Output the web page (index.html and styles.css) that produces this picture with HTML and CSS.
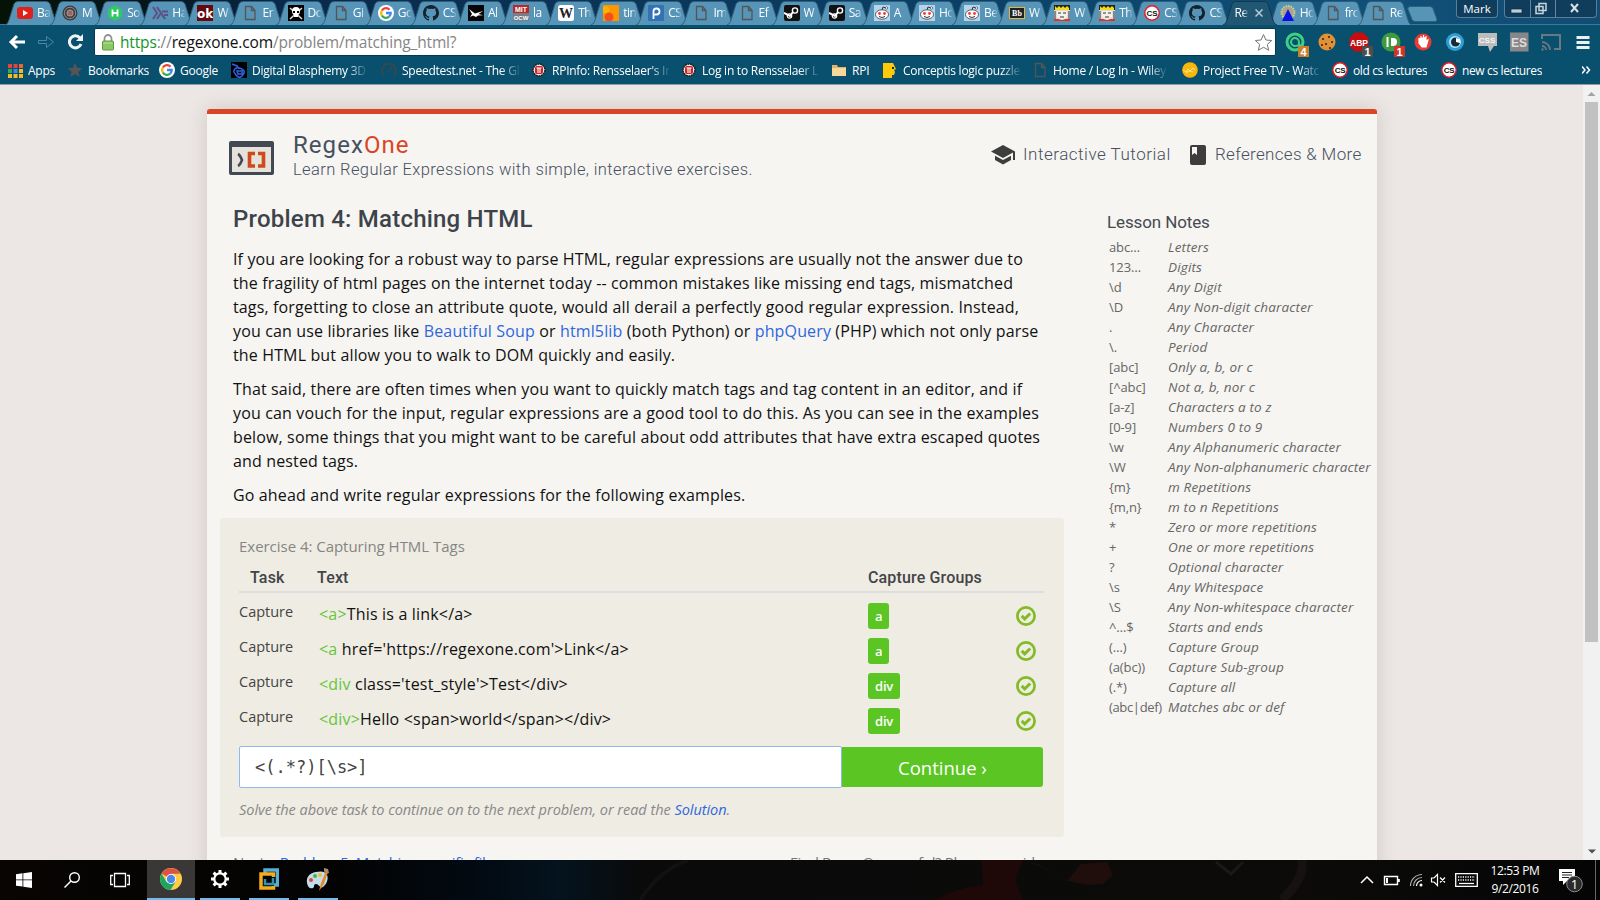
FILE: index.html
```html
<!DOCTYPE html>
<html lang="en">
<head>
<meta charset="utf-8">
<title>RegexOne - Problem 4: Matching HTML</title>
<link rel="stylesheet" href="styles.css">
</head>
<body>
<svg class="defs" width="0" height="0">
  <symbol id="tab" viewBox="0 0 54 25"><path class="tab-fill" d="M0 25C3 24 3 22 4 20L9 4Q10 1.500 13 1.500H41Q44 1.500 45 4L50 20C51 22 51 24 54 25"/></symbol>
  <symbol id="page" viewBox="0 0 16 16"><path d="M3.500 1.500h6l3.500 4v9H3.500zM9.500 1.500v4H13" fill="none" stroke="#555" stroke-width="1.300"/></symbol>
  <symbol id="google" viewBox="0 0 16 16"><circle cx="8" cy="8" r="8" fill="#fff"/><g fill="none" stroke-width="2.300"><path d="M3.900 5.500A4.700 4.700 0 0 1 11.500 4.700" stroke="#ea4335"/><path d="M3.900 5.500a4.700 4.700 0 0 0 0 5" stroke="#fbbc05"/><path d="M3.900 10.500a4.700 4.700 0 0 0 7.400 1" stroke="#34a853"/><path d="M11.300 11.500A4.700 4.700 0 0 0 12.700 8H8" stroke="#4285f4"/></g></symbol>
  <symbol id="github" viewBox="0 0 16 16"><path fill="#15232d" d="M8 0C3.580 0 0 3.580 0 8c0 3.540 2.290 6.530 5.470 7.590.4.070.55-.17.55-.38v-1.490c-2.230.48-2.690-.95-2.690-.95-.36-.92-.89-1.170-.89-1.170-.72-.5.060-.49.060-.49.8.060 1.230.82 1.230.82.71 1.220 1.870.87 2.330.66.070-.52.280-.87.500-1.070-1.780-.2-3.640-.89-3.640-3.950 0-.87.310-1.590.82-2.150-.08-.2-.36-1.020.080-2.120 0 0 .67-.21 2.200.82a7.600 7.600 0 0 1 4 0c1.530-1.040 2.200-.82 2.200-.82.44 1.100.16 1.920.080 2.120.51.560.82 1.270.82 2.150 0 3.070-1.870 3.750-3.650 3.950.29.250.54.730.54 1.480v2.200c0 .21.150.46.550.38A8 8 0 0 0 8 0"/></symbol>
  <symbol id="steam" viewBox="0 0 16 16"><rect width="16" height="16" rx="2" fill="#111"/><circle cx="11" cy="5.500" r="2.600" fill="none" stroke="#fff" stroke-width="1.400"/><path d="M0 8l6 3 3-4" stroke="#fff" stroke-width="2" fill="none"/><circle cx="5.500" cy="11" r="2.200" fill="none" stroke="#fff" stroke-width="1.200"/></symbol>
  <symbol id="reddit" viewBox="0 0 16 16"><rect width="16" height="16" fill="#b5d5ef"/><path d="M8 5l1-3 3 1" fill="none" stroke="#333"/><circle cx="12.500" cy="3" r="1.200" fill="#fff" stroke="#333" stroke-width=".6"/><ellipse cx="8" cy="9.500" rx="6.500" ry="4.700" fill="#fff" stroke="#333" stroke-width=".8"/><circle cx="5.500" cy="8.500" r="1.400" fill="#f33"/><circle cx="10.500" cy="8.500" r="1.400" fill="#f33"/><path d="M5 11.500q3 2 6 0" fill="none" stroke="#333"/></symbol>
  <symbol id="king" viewBox="0 0 16 16"><rect width="16" height="16" fill="#ddd"/><path d="M0 0h16v5H0z" fill="#222"/><path d="M1 1l2 2 2-2 2 2 2-2 2 2 2-2 2 2v2H1z" fill="#f5dc1a"/><path d="M3 6h10v6l-5 3-5-3z" fill="#f4f0ea"/><path d="M4 8h3M9 8h3M6 12h4M1 6v8M15 6v8" stroke="#333"/><path d="M0 14h4l4 1 4-1h4v2H0z" fill="#d32"/></symbol>
  <symbol id="cs" viewBox="0 0 16 16"><circle cx="8" cy="8" r="7.200" fill="#fff" stroke="#e31b23" stroke-width="1.400"/><text x="8" y="11" text-anchor="middle" class="fav-cs">CS</text></symbol>
  <symbol id="rpi" viewBox="0 0 16 16"><circle cx="8" cy="8" r="6" fill="#eee" stroke="#222" stroke-width="1.600" stroke-dasharray="2 .6"/><rect x="4" y="4" width="8" height="8" rx="2" fill="#c9252b"/><path d="M5.500 6h5M7 6v5M9 6v5" stroke="#fff" stroke-width="1.100"/></symbol>
  <symbol id="check" viewBox="0 0 20 20"><circle cx="10" cy="10" r="8.600" fill="none" stroke="#82bb26" stroke-width="2.700"/><path d="M5.700 9.900l3 3 5.500-5.400" fill="none" stroke="#82bb26" stroke-width="3"/></symbol>
</svg>

<header class="browser">
  <div class="tabstrip">
    <div class="tabs">
      <div class="tab"><svg class="shape"><use href="#tab"/></svg><svg class="fav" viewBox="0 0 16 16"><rect y="2" width="16" height="12" rx="3" fill="#e0201b"/><path d="M6 5l5 3-5 3z" fill="#fff"/></svg><span>Ba</span></div>
      <div class="tab"><svg class="shape"><use href="#tab"/></svg><svg class="fav" viewBox="0 0 16 16"><circle cx="8" cy="8" r="7.500" fill="#3d3d40"/><circle cx="8" cy="8" r="5.700" fill="none" stroke="#aaa" stroke-width=".7"/><circle cx="8" cy="8" r="3.500" fill="#98908b"/><path d="M7 6v4M9 6v4" stroke="#a33"/></svg><span>M</span></div>
      <div class="tab"><svg class="shape"><use href="#tab"/></svg><svg class="fav" viewBox="0 0 16 16"><path d="M8 0l7 4v8l-7 4-7-4V4z" fill="#2ec866"/><path d="M5.500 4.500v7M10.500 4.500v7M5.500 8h5" stroke="#fff" stroke-width="1.800"/></svg><span>So</span></div>
      <div class="tab"><svg class="shape"><use href="#tab"/></svg><svg class="fav" viewBox="0 0 16 16"><path d="M1 2l4 6-4 6M5 2l8 12M5 14l4-6M10 6.500h6M12 10h4" fill="none" stroke="#5e5086" stroke-width="2"/></svg><span>Ha</span></div>
      <div class="tab"><svg class="shape"><use href="#tab"/></svg><svg class="fav" viewBox="0 0 16 16"><rect width="16" height="16" fill="#640a0c"/><text x="8" y="12.500" text-anchor="middle" class="fav-ok">ok</text></svg><span>W</span></div>
      <div class="tab"><svg class="shape"><use href="#tab"/></svg><svg class="fav"><use href="#page"/></svg><span>Er</span></div>
      <div class="tab"><svg class="shape"><use href="#tab"/></svg><svg class="fav" viewBox="0 0 16 16"><rect width="16" height="16" fill="#000"/><path d="M2 3l12 11M14 3L2 14" stroke="#ddd" stroke-width="1.500"/><path d="M4 6q0-4 4-4t4 4q0 3-2 4v2H6v-2Q4 9 4 6" fill="#fff"/><path d="M5 6h2v2H5zM9 6h2v2H9z"/></svg><span>Do</span></div>
      <div class="tab"><svg class="shape"><use href="#tab"/></svg><svg class="fav"><use href="#page"/></svg><span>Gi</span></div>
      <div class="tab"><svg class="shape"><use href="#tab"/></svg><svg class="fav"><use href="#google"/></svg><span>Go</span></div>
      <div class="tab"><svg class="shape"><use href="#tab"/></svg><svg class="fav"><use href="#github"/></svg><span>CS</span></div>
      <div class="tab"><svg class="shape"><use href="#tab"/></svg><svg class="fav" viewBox="0 0 16 16"><rect width="16" height="16" fill="#050505"/><path d="M1 4l6 4.500L15 6l-4.500 3 4.500 1.200-5 .3-2 1.500-3-1.500-3 1.500 2-3z" fill="#fff"/></svg><span>Al</span></div>
      <div class="tab"><svg class="shape"><use href="#tab"/></svg><svg class="fav" viewBox="0 0 16 16"><rect width="16" height="8" fill="#b8292c"/><rect y="8" width="16" height="8" fill="#777f86"/><text x="8" y="7" text-anchor="middle" class="fav-mit">MIT</text><text x="8" y="15" text-anchor="middle" class="fav-ocw">OCW</text></svg><span>la</span></div>
      <div class="tab"><svg class="shape"><use href="#tab"/></svg><svg class="fav" viewBox="0 0 16 16"><rect width="16" height="16" rx="2.500" fill="#fff"/><text x="8" y="12.500" text-anchor="middle" class="fav-wiki">W</text></svg><span>Th</span></div>
      <div class="tab"><svg class="shape"><use href="#tab"/></svg><svg class="fav" viewBox="0 0 16 16"><rect width="16" height="16" fill="#ff9600"/><circle cx="3" cy="5" r="3.500" fill="#ffb300"/><circle cx="6" cy="12" r="4.500" fill="#f2511b"/></svg><span>tin</span></div>
      <div class="tab"><svg class="shape"><use href="#tab"/></svg><svg class="fav" viewBox="0 0 16 16"><rect width="16" height="16" rx="1" fill="#3273b5"/><path d="M5.500 14V6.500q0-3 3-3t3 3-3 3h-2" fill="none" stroke="#fff" stroke-width="1.800"/></svg><span>CS</span></div>
      <div class="tab"><svg class="shape"><use href="#tab"/></svg><svg class="fav"><use href="#page"/></svg><span>Im</span></div>
      <div class="tab"><svg class="shape"><use href="#tab"/></svg><svg class="fav"><use href="#page"/></svg><span>Ef</span></div>
      <div class="tab"><svg class="shape"><use href="#tab"/></svg><svg class="fav"><use href="#steam"/></svg><span>W</span></div>
      <div class="tab"><svg class="shape"><use href="#tab"/></svg><svg class="fav"><use href="#steam"/></svg><span>Sa</span></div>
      <div class="tab"><svg class="shape"><use href="#tab"/></svg><svg class="fav"><use href="#reddit"/></svg><span>A</span></div>
      <div class="tab"><svg class="shape"><use href="#tab"/></svg><svg class="fav"><use href="#reddit"/></svg><span>Ho</span></div>
      <div class="tab"><svg class="shape"><use href="#tab"/></svg><svg class="fav"><use href="#reddit"/></svg><span>Be</span></div>
      <div class="tab"><svg class="shape"><use href="#tab"/></svg><svg class="fav" viewBox="0 0 16 16"><rect x=".5" y="2.500" width="15" height="11" fill="#222" stroke="#e7b53a"/><text x="8" y="11" text-anchor="middle" class="fav-bb">Bb</text></svg><span>W</span></div>
      <div class="tab"><svg class="shape"><use href="#tab"/></svg><svg class="fav"><use href="#king"/></svg><span>W</span></div>
      <div class="tab"><svg class="shape"><use href="#tab"/></svg><svg class="fav"><use href="#king"/></svg><span>Th</span></div>
      <div class="tab"><svg class="shape"><use href="#tab"/></svg><svg class="fav"><use href="#cs"/></svg><span>CS</span></div>
      <div class="tab"><svg class="shape"><use href="#tab"/></svg><svg class="fav"><use href="#github"/></svg><span>CS</span></div>
      <div class="tab active"><svg class="shape"><use href="#tab"/></svg><span>Re</span><svg class="close" viewBox="0 0 8 8"><path d="M.5.500l7 7M7.500.500l-7 7" stroke="#b5cbd6" stroke-width="1.500"/></svg></div>
      <div class="tab"><svg class="shape"><use href="#tab"/></svg><svg class="fav" viewBox="0 0 16 16"><circle cx="8" cy="7.500" r="6.500" fill="#a9a58c" stroke="#d9cf84" stroke-width="2" stroke-dasharray="1.500 1"/><path d="M8 4l6 12H2z" fill="#0b12e6"/></svg><span>Ho</span></div>
      <div class="tab"><svg class="shape"><use href="#tab"/></svg><svg class="fav"><use href="#page"/></svg><span>fro</span></div>
      <div class="tab"><svg class="shape"><use href="#tab"/></svg><svg class="fav"><use href="#page"/></svg><span>Re</span></div>
    </div>
    <svg class="newtab" width="31" height="16" viewBox="0 0 31 16"><path d="M3 .5h20q2 0 3 2l4 11q0 2-2 2H8q-2 0-3-2L.800 3q0-2.500 2.200-2.500" fill="#5695b5" stroke="#2c607d"/></svg>
    <div class="user">Mark</div>
    <div class="winctl">
      <svg width="92" height="17" viewBox="0 0 92 17"><path d="M25.500 0v17M50.500 0v17" stroke="#6286a0"/><g fill="#b9cedb" stroke="#10283b" stroke-width=".7"><rect x="6" y="9" width="11" height="4"/></g><path d="M34 3.500h7v7h-7zM31 6.500h7v7h-7z" fill="none" stroke="#c5d5df" stroke-width="1.500"/><path d="M66 4l7 8M73 4l-7 8" stroke="#d5e1e8" stroke-width="2"/></svg>
    </div>
  </div>

  <div class="toolbar">
    <svg class="nav" width="88" height="20" viewBox="0 0 88 20"><path d="M25 10H12M17 4l-6 6 6 6" fill="none" stroke="#fff" stroke-width="3"/><path d="M38.500 8.500h8v-4l7 5.500-7 5.500v-4h-8z" fill="none" stroke="#4d86a3"/><path d="M80 6a6 6 0 1 0 1 6" fill="none" stroke="#eef3f6" stroke-width="3"/><path d="M83 2v7h-7z" fill="#eef3f6"/></svg>
    <div class="omnibox">
      <svg width="12" height="17" viewBox="0 0 12 17"><path d="M2.500 8V4.500a3.500 3.500 0 0 1 7 0V8" fill="none" stroke="#929292" stroke-width="1.800"/><rect x=".5" y="7" width="11" height="9" rx="1" fill="#8cc766" stroke="#5a9c3a"/><path d="M1.500 9h9" stroke="#b9e39d"/></svg>
      <p class="url"><b>https</b>://<i>regexone.com</i>/problem/matching_html?</p>
      <svg class="star" width="19" height="19" viewBox="0 0 19 19"><path d="M9.500 1.500l2.400 5.500 5.800.5-4.400 3.900 1.400 5.900-5.200-3.100-5.200 3.100 1.400-5.900L1.300 7.500 7.100 7z" fill="#fff" stroke="#777"/></svg>
    </div>
    <div class="exts">
      <svg viewBox="0 0 32 32"><circle cx="16" cy="16" r="8" fill="none" stroke="#3fcf83" stroke-width="3"/><path d="M20 19v-3a4 4 0 1 0-2 3.500q3 1 4-1" fill="none" stroke="#3fcf83" stroke-width="2"/><rect x="19" y="20" width="11" height="11" fill="#c9812f"/><text x="24.500" y="29.500" class="count">4</text></svg>
      <svg viewBox="0 0 32 32"><circle cx="16" cy="16" r="8.500" fill="#dd9138"/><path d="M11 12h2v2h-2zM17 10h2v2h-2zM14 17h2v2h-2zM20 15h2v2h-2zM18 21h2v2h-2zM10 18h2v2h-2z" fill="#6c350c"/></svg>
      <svg viewBox="0 0 32 32"><path d="M12 6.500h8l5.500 5.500v8L20 25.500h-8L6.500 20v-8z" fill="#c70d0d"/><text x="16" y="19.500" class="abp">ABP</text><rect x="19" y="20" width="11" height="11" fill="#4d4d4d"/><text x="24.500" y="29.500" class="count">1</text></svg>
      <svg viewBox="0 0 32 32"><circle cx="16" cy="16" r="9.500" fill="#3f9a3f"/><path d="M12.500 11v10" stroke="#fff" stroke-width="2"/><path d="M16 12h2a4 4 0 0 1 0 8h-2z" fill="#fff"/><rect x="19" y="20" width="11" height="11" fill="#ce3427"/><text x="24.500" y="29.500" class="count">1</text></svg>
      <svg viewBox="0 0 32 32"><circle cx="16" cy="16" r="8.500" fill="#e83c30"/><path d="M12 12v5l3 4h4l2-7-2 1v-4M14 15v-5M16.500 15V9M19 15v-5" fill="#fff" stroke="#fff" stroke-width="1.200"/></svg>
      <svg viewBox="0 0 32 32"><circle cx="16" cy="16" r="9" fill="#2f9fd3"/><circle cx="16" cy="16" r="6" fill="#b4e4f8"/><circle cx="16.500" cy="16" r="4.500" fill="#132b3a"/><path d="M17 12v4l4 1v-4z" fill="#fff"/></svg>
      <svg viewBox="0 0 32 32"><path d="M7 7h19v13h-3l-4 6-2-6H7z" fill="#bcbcbc"/><text x="16" y="17" class="css">CSS</text></svg>
      <svg viewBox="0 0 32 32"><rect x="7" y="6.500" width="18.500" height="19" fill="#878787"/><text x="16" y="20.500" class="es">ES</text></svg>
      <svg viewBox="0 0 32 32"><path d="M7 13V9h18v14h-6" fill="none" stroke="#68797f" stroke-width="2"/><path d="M7 16a8 8 0 0 1 8 8M7 20a4 4 0 0 1 4 4" fill="none" stroke="#68797f" stroke-width="1.800"/><circle cx="7.500" cy="23.500" r="1.200" fill="#68797f"/></svg>
      <svg viewBox="0 0 32 32"><path d="M9.500 11.500h13M9.500 16.500h13M9.500 21.500h13" stroke="#e9f0f3" stroke-width="3.200"/></svg>
    </div>
  </div>

  <nav class="bookmarks">
    <a><svg viewBox="0 0 16 16"><path d="M1 2h4v4H1z" fill="#e4453a"/><path d="M6.500 2h4v4h-4z" fill="#e4453a"/><path d="M12 2h4v4h-4z" fill="#e8653a"/><path d="M1 7h4v4H1z" fill="#35a853"/><path d="M6.500 7h4v4h-4z" fill="#4285f4"/><path d="M12 7h4v4h-4zM1 12h4v4H1zM6.500 12h4v4h-4zM12 12h4v4h-4z" fill="#f5b921"/></svg><span>Apps</span></a>
    <a><svg viewBox="0 0 16 16"><path d="M8 .8l2 5 5.500.4-4.200 3.500 1.300 5.300L8 12.100 3.400 15l1.300-5.300L.5 6.200 6 5.800z" fill="#555"/></svg><span>Bookmarks</span></a>
    <a><svg><use href="#google"/></svg><span>Google</span></a>
    <a><svg viewBox="0 0 16 16"><rect width="16" height="16" fill="#000"/><path d="M1 2l5 2 2 3M3 9q1-4 5-3t5 3-2 5-6-1-2-4M6 9h5v3H7z" stroke="#3160dd" stroke-width="1.600" fill="none"/></svg><span>Digital Blasphemy 3D</span></a>
    <a><svg viewBox="0 0 16 16"><path d="M3.500 14a7 7 0 1 1 9 0" fill="none" stroke="#3c474c" stroke-width="1.700"/><path d="M7 10l4-5" stroke="#3c474c" stroke-width="2"/></svg><span>Speedtest.net - The Gl</span></a>
    <a><svg><use href="#rpi"/></svg><span>RPInfo: Rensselaer's In</span></a>
    <a><svg><use href="#rpi"/></svg><span>Log in to Rensselaer L</span></a>
    <a><svg viewBox="0 0 16 16"><path d="M1 3h5l1 2h8v9H1z" fill="#e2b469"/><path d="M1 6h14v8H1z" fill="#f8d898"/></svg><span>RPI</span></a>
    <a><svg viewBox="0 0 16 16"><path d="M1 1h10l3 6-2 1 1 2-1 3h-2v3H1z" fill="#fdcb0a"/><path d="M10 5h2v2h-2z" fill="#222"/></svg><span>Conceptis logic puzzle</span></a>
    <a><svg><use href="#page"/></svg><span>Home / Log In - Wiley</span></a>
    <a><svg viewBox="0 0 16 16"><circle cx="8" cy="8" r="7.800" fill="#f7b80b"/><path d="M1 8l3 2 2-3 2 2 3-3 2 2M4 11l3-2 4 1" fill="none" stroke="#fce6a0" stroke-width=".9"/></svg><span>Project Free TV - Watc</span></a>
    <a><svg><use href="#cs"/></svg><span>old cs lectures</span></a>
    <a><svg><use href="#cs"/></svg><span>new cs lectures</span></a>
    <svg class="more" viewBox="0 0 10 10"><path d="M0 1.500l3 3.500-3 3.500M4.500 1.500l3 3.500-3 3.500" fill="none" stroke="#fff" stroke-width="1.500"/></svg>
  </nav>
</header>

<div class="viewport">
  <div class="canvas">
    <main class="card">
      <header class="site-head">
        <svg class="logo" width="45" height="34" viewBox="0 0 45 34"><rect width="45" height="34" rx="2" fill="#424953"/><rect x="3" y="6" width="39" height="25" fill="#e4e2db"/><path d="M9 13q2 1 4 6-2 5-4 6" fill="none" stroke="#424953" stroke-width="2.600"/><path d="M26 12.500h-5.500v12.500H26M29 12.500h5.500v12.500H29" fill="none" stroke="#cf4a1b" stroke-width="3.600"/></svg>
        <div class="brand"><p class="name">Regex<em>One</em></p><p class="tagline">Learn Regular Expressions with simple, interactive exercises.</p></div>
        <svg class="cap" width="24" height="20" viewBox="0 0 24 20"><path d="M12 0L0 6.500 12 13l10-5.400V15h2V6.500zM4 10.700v4.200L12 19.500l8-4.600v-4.200L12 15z" fill="#3d3d3d"/></svg>
        <a class="tut">Interactive Tutorial</a>
        <svg class="book" width="16" height="20" viewBox="0 0 16 20"><rect width="16" height="20" rx="2" fill="#3d3d3d"/><path d="M2 2h5v8L4.500 8 2 10z" fill="#f6f5f1"/></svg>
        <a class="ref">References &amp; More</a>
      </header>
      <div class="columns">
        <article>
          <h1>Problem 4: Matching HTML</h1>
          <p class="para">If you are looking for a robust way to parse HTML, regular expressions are usually not the answer due to<br>the fragility of html pages on the internet today -- common mistakes like missing end tags, mismatched<br>tags, forgetting to close an attribute quote, would all derail a perfectly good regular expression. Instead,<br>you can use libraries like <a>Beautiful Soup</a> or <a>html5lib</a> (both Python) or <a>phpQuery</a> (PHP) which not only parse<br>the HTML but allow you to walk to DOM quickly and easily.</p>
          <p class="para">That said, there are often times when you want to quickly match tags and tag content in an editor, and if<br>you can vouch for the input, regular expressions are a good tool to do this. As you can see in the examples<br>below, some things that you might want to be careful about odd attributes that have extra escaped quotes<br>and nested tags.</p>
          <p class="para">Go ahead and write regular expressions for the following examples.</p>
          <section class="exercise">
            <h2>Exercise 4: Capturing HTML Tags</h2>
            <div class="row head"><span>Task</span><span>Text</span><span>Capture Groups</span></div>
            <div class="row"><span class="task">Capture</span><span class="text"><i>&lt;a&gt;</i>This is a link&lt;/a&gt;</span><span><b class="group">a</b></span><svg><use href="#check"/></svg></div>
            <div class="row"><span class="task">Capture</span><span class="text"><i>&lt;a</i> href='https://regexone.com'&gt;Link&lt;/a&gt;</span><span><b class="group">a</b></span><svg><use href="#check"/></svg></div>
            <div class="row"><span class="task">Capture</span><span class="text"><i>&lt;div</i> class='test_style'&gt;Test&lt;/div&gt;</span><span><b class="group">div</b></span><svg><use href="#check"/></svg></div>
            <div class="row"><span class="task">Capture</span><span class="text"><i>&lt;div&gt;</i>Hello &lt;span&gt;world&lt;/span&gt;&lt;/div&gt;</span><span><b class="group">div</b></span><svg><use href="#check"/></svg></div>
            <div class="answer"><div class="field">&lt;(.*?)[\s&gt;]</div><div class="go">Continue ›</div></div>
            <p class="hint">Solve the above task to continue on to the next problem, or read the <a>Solution</a>.</p>
          </section>
          <footer class="next"><p>Next: <a>Problem 5: Matching specific files</a></p><p>Find RegexOne useful? Please consider</p></footer>
        </article>
        <aside>
          <h3>Lesson Notes</h3>
          <dl>
            <dt>abc…</dt><dd>Letters</dd>
            <dt>123…</dt><dd>Digits</dd>
            <dt>\d</dt><dd>Any Digit</dd>
            <dt>\D</dt><dd>Any Non-digit character</dd>
            <dt>.</dt><dd>Any Character</dd>
            <dt>\.</dt><dd>Period</dd>
            <dt>[abc]</dt><dd>Only a, b, or c</dd>
            <dt>[^abc]</dt><dd>Not a, b, nor c</dd>
            <dt>[a-z]</dt><dd>Characters a to z</dd>
            <dt>[0-9]</dt><dd>Numbers 0 to 9</dd>
            <dt>\w</dt><dd>Any Alphanumeric character</dd>
            <dt>\W</dt><dd>Any Non-alphanumeric character</dd>
            <dt>{m}</dt><dd>m Repetitions</dd>
            <dt>{m,n}</dt><dd>m to n Repetitions</dd>
            <dt>*</dt><dd>Zero or more repetitions</dd>
            <dt>+</dt><dd>One or more repetitions</dd>
            <dt>?</dt><dd>Optional character</dd>
            <dt>\s</dt><dd>Any Whitespace</dd>
            <dt>\S</dt><dd>Any Non-whitespace character</dd>
            <dt>^…$</dt><dd>Starts and ends</dd>
            <dt>(…)</dt><dd>Capture Group</dd>
            <dt>(a(bc))</dt><dd>Capture Sub-group</dd>
            <dt>(.*)</dt><dd>Capture all</dd>
            <dt>(abc|def)</dt><dd>Matches abc or def</dd>
          </dl>
        </aside>
      </div>
    </main>
  </div>
  <div class="scrollbar">
    <svg width="17" height="17" viewBox="0 0 17 17"><path d="M4.500 11h8l-4-4z" fill="#a3a3a3"/></svg>
    <div class="thumb"></div>
    <svg width="17" height="17" viewBox="0 0 17 17"><path d="M5 6.500h8l-4 4z" fill="#505050"/></svg>
  </div>
</div>

<footer class="taskbar">
  <svg class="wall" width="700" height="40" viewBox="0 0 700 40"><path d="M0 40q20-30 48-40" stroke="#121110" stroke-width="4" fill="none"/><path d="M295 40q22-13 48-15l-2-25h42l-8 20 8 20z" fill="#1e0808"/><path d="M385 2q15 2 42 19l14-17 26-2 6 13-10 9-15 1-20-4-30-17z" fill="#1f0e0c"/><path d="M576 2l15 12 12-12" stroke="#1b1818" stroke-width="3" fill="none"/><path d="M662 0q3 18-20 40" stroke="#181112" stroke-width="9" fill="none"/></svg>
  <div class="apps">
    <div><svg width="16" height="16" viewBox="0 0 16 16"><path d="M0 2.200l6.500-.9v6.200H0zM7.300 1.200L16 0v7.500H7.300zM0 8.300h6.500v6.300L0 13.700zM7.300 8.300H16V16l-8.700-1.200z" fill="#fff"/></svg></div>
    <div><svg width="16" height="16" viewBox="0 0 16 16"><circle cx="10.500" cy="5.500" r="4.800" fill="none" stroke="#fff" stroke-width="1.400"/><path d="M7 9l-6.500 6.500" stroke="#fff" stroke-width="1.500"/></svg></div>
    <div><svg width="20" height="16" viewBox="0 0 20 16"><path d="M4.500 1.500h11v13h-11zM3 3.500H.7v9H3M17 3.500h2.300v9H17" fill="none" stroke="#fff" stroke-width="1.300"/></svg></div>
    <div class="open focus"><svg width="22" height="22" viewBox="0 0 22 22"><circle cx="11" cy="11" r="11" fill="#fc4"/><path d="M11 11L1.500 5.500A11 11 0 0 1 20.500 5.700H11z" fill="#de5145"/><path d="M1.500 5.500A11 11 0 0 0 10.500 22l5.200-8.500L11 16 6.300 13.700z" fill="#1da462"/><circle cx="11" cy="11" r="5" fill="#fff"/><circle cx="11" cy="11" r="4.200" fill="#4a88ee"/></svg></div>
    <div class="open"><svg width="18" height="18" viewBox="0 0 18 18"><circle cx="9" cy="9" r="5.700" fill="none" stroke="#fff" stroke-width="2.200"/><path d="M9 0v3M9 15v3M0 9h3M15 9h3M2.600 2.600l2.500 2.500M12.900 12.900l2.500 2.500M15.400 2.600l-2.500 2.500M5.100 12.900l-2.500 2.500" stroke="#fff" stroke-width="3"/></svg></div>
    <div class="open"><svg width="20" height="22" viewBox="0 0 20 22"><path d="M6 6V2h12.500v15H15" fill="none" stroke="#58afd1" stroke-width="3.500"/><path d="M14 10v6H6v-5" fill="none" stroke="#2c94b9" stroke-width="2.500"/><path d="M14.500 9V6H2v14h12.500v-2" fill="none" stroke="#f6aa1d" stroke-width="3.500"/></svg></div>
    <div class="open"><svg width="24" height="23" viewBox="0 0 24 23"><path d="M10 4C3 5 0 10 1 15s4 6 6 5 0-4 3-4 4 5 7 3 6-8 4-12-6-4-11-3" fill="#c2deed"/><circle cx="5" cy="12" r="2" fill="#de473b"/><circle cx="9" cy="8" r="2" fill="#55ae42"/><circle cx="14" cy="7" r="2" fill="#f5bf24"/><path d="M20 3l-5 12-2 8 5-7 4-12z" fill="#e58a2e"/><path d="M18 0l4 1 1 4-3 1-2-3z" fill="#b38a66"/></svg></div>
  </div>
  <div class="tray">
    <svg width="87" height="18" viewBox="0 0 87 18"><path d="M1 12l6-6 6 6" fill="none" stroke="#fff" stroke-width="1.500"/><path d="M24.500 5.500h13v8h-13z" fill="none" stroke="#fff" stroke-width="1.400"/><path d="M26 7h2v5h-2zM38 8h1.800v3H38z" fill="#fff"/><g fill="none" stroke="#aaa" stroke-width="1.200"><path d="M50.500 15A11.500 11.500 0 0 1 62 3.500M53.500 15A8.500 8.500 0 0 1 62 6.500"/><path d="M56.500 15A5.500 5.500 0 0 1 62 9.500" stroke="#fff"/></g><circle cx="61" cy="14" r="1.500" fill="#fff"/><path d="M71.500 7h2.500l3.500-3.500v11L74 11h-2.500zM80 6.500l5 5M85 6.500l-5 5" fill="none" stroke="#fff" stroke-width="1.200"/></svg>
    <svg width="23" height="14" viewBox="0 0 23 14"><path d="M.7.7h21.600v12.600H.7z" fill="none" stroke="#fff" stroke-width="1.300"/><path d="M3 4h17M3 7h17" stroke="#fff" stroke-width="1.300" stroke-dasharray="1.200 1.200"/><path d="M4 10.500h15" stroke="#fff" stroke-width="1.300"/></svg>
    <p class="clock">12:53 PM<br>9/2/2016</p>
    <svg width="26" height="26" viewBox="0 0 26 26"><path d="M1 2h16v12H9l-4 4v-4H1z" fill="#fff"/><path d="M4 5.500h10M4 8h10M4 10.500h7" stroke="#222" stroke-width="1.200"/><circle cx="16.500" cy="17" r="7.800" fill="#2a2a2a" stroke="#8a8a8a"/><text x="16.500" y="21.500" class="notes">1</text></svg>
    <i class="peek"></i>
  </div>
</footer>
</body>
</html>
```

FILE: styles.css
```css
* { box-sizing: border-box; }
body, p, h1, h2, h3, dl, dd { margin: 0; }
body {
  width: 1600px;
  height: 900px;
  overflow: hidden;
  display: flex;
  flex-direction: column;
  font-family: "Open Sans", "Noto Sans", sans-serif;
  background: #ece7e5;
}
svg { display: block; flex: none; }
.defs { position: absolute; }

/* Browser chrome */
.browser {
  height: 85px;
  background: #09506f;
  border-bottom: 1px solid #8f9ca2;
  color: #fff;
}
.tabstrip {
  height: 25px;
  display: flex;
  align-items: flex-start;
  background: linear-gradient(90deg, #041305 0, #06151b 140px, #08294a 280px, #0b3559 620px, #0b4167 1000px, #105078 1370px, #134c73 1600px);
  border-bottom: 1px solid #397a9c;
}
.tabs { display: flex; margin-left: 5px; width: 1402px; height: 25px; }
.tab {
  position: relative;
  width: 45.1px;
  height: 25px;
  display: flex;
  align-items: center;
  padding-left: 12px;
  gap: 4px;
}
.shape { position: absolute; left: 0; top: 0; width: 54px; height: 25px; overflow: visible; }
.tab-fill { fill: #5695b7; stroke: #315f7b; stroke-width: 1; }
.tab .fav { position: relative; width: 16px; height: 16px; }
.tab span {
  position: relative;
  width: 13px;
  overflow: hidden;
  white-space: nowrap;
  font-size: 12px;
  letter-spacing: -.5px;
  color: #fff;
  -webkit-mask-image: linear-gradient(90deg, #000 60%, rgba(0, 0, 0, .15));
  mask-image: linear-gradient(90deg, #000 60%, rgba(0, 0, 0, .15));
}
.tab.active { z-index: 2; gap: 7px; }
.tab.active .shape { filter: brightness(.56) saturate(1.500); }
.close { position: relative; width: 8px; height: 8px; }
.fav-cs { font: bold 8px "Liberation Sans", sans-serif; fill: #111; }
.fav-ok { font: bold 12px "DejaVu Sans", sans-serif; fill: #fff; }
.fav-mit, .fav-ocw { font: bold 7px "Liberation Sans", sans-serif; fill: #fff; }
.fav-ocw { font-size: 6px; }
.fav-wiki { font: bold 14px "Liberation Serif", serif; fill: #222; }
.fav-bb { font: bold 8px "Liberation Serif", serif; fill: #fff; }
.newtab { margin-top: 6px; }
.user, .winctl {
  height: 18px;
  border: 1px solid #54809b;
  border-top: 0;
  border-radius: 0 0 4px 4px;
  background: #113d5c;
}
.user { margin-left: 18px; width: 42px; text-align: center; font-size: 11.500px; line-height: 17px; }
.winctl { margin-left: 6px; width: 93px; }

.toolbar { height: 34px; display: flex; align-items: center; }
.nav { margin-right: 6px; }
.omnibox {
  width: 1182px;
  height: 28px;
  display: flex;
  align-items: center;
  padding: 0 2px 0 7px;
  background: #fff;
  border: 1px solid #06384e;
  border-radius: 2px;
}
.url { margin-left: 6px; flex: 1; font-size: 15.500px; letter-spacing: -.15px; color: #858585; }
.url b { font-weight: normal; color: #15942a; }
.url i { font-style: normal; color: #111; }
.exts { display: flex; margin-left: 3px; }
.exts svg { width: 32px; height: 32px; }
.exts text { text-anchor: middle; fill: #fff; font-family: "Liberation Sans", sans-serif; font-weight: bold; }
.exts .count { font-size: 11px; }
.exts .abp { font-size: 8.500px; }
.exts .css { font-size: 8px; fill: #f5f5f5; }
.exts .es { font-size: 12px; fill: #ddd; }

.bookmarks {
  display: grid;
  grid-template-columns: 60px 92px 72px 150px 150px 150px 150px 51px 150px 150px 150px 109px 141px 10px;
  align-items: center;
  height: 22px;
  padding-left: 7px;
}
.bookmarks a { display: flex; align-items: center; gap: 5px; font-size: 12px; letter-spacing: -.25px; min-width: 0; }
.bookmarks a:nth-child(n+12) { letter-spacing: -.37px; }
.bookmarks a svg { width: 16px; height: 16px; }
.bookmarks a span { max-width: 117px; overflow: hidden; white-space: nowrap; }
.bookmarks a:nth-child(n+4):nth-child(-n+11):not(:nth-child(8)) span {
  -webkit-mask-image: linear-gradient(90deg, #000 84%, rgba(0, 0, 0, .1) 100%);
  mask-image: linear-gradient(90deg, #000 84%, rgba(0, 0, 0, .1) 100%);
}
.more { width: 10px; height: 10px; }

/* Page area */
.viewport { height: 775px; display: flex; overflow: hidden; }
.canvas { width: 1583px; height: 775px; padding: 24px 0 0 207px; overflow: hidden; }
.card {
  width: 1170px;
  height: 800px;
  background: #f6f5f1;
  border-top: 5px solid #d94625;
  border-radius: 3px 3px 0 0;
  box-shadow: 0 0 20px rgba(60, 40, 30, .16);
}
.site-head { height: 90px; display: flex; align-items: flex-start; padding: 0 0 0 22px; font-family: Roboto, "Open Sans", sans-serif; color: #46505f; white-space: nowrap; }
.logo { margin-top: 27px; }
.brand { margin-left: 19px; width: 698px; padding-top: 16px; }
.name { font-size: 24px; line-height: 30px; letter-spacing: 1.050px; }
.name em { font-style: normal; color: #d94625; }
.tagline { font-size: 16.500px; line-height: 20px; font-weight: 300; letter-spacing: .39px; }
.cap { margin-top: 31px; }
.book { margin: 31px 9px 0 21px; }
.tut, .ref { margin-top: 28px; font-size: 17px; line-height: 24px; font-weight: 300; }
.tut { margin-left: 8px; width: 146px; letter-spacing: .52px; }
.ref { letter-spacing: .32px; }

.columns { display: flex; }
article { width: 901px; padding-left: 26px; }
h1 { font: 500 24px/30px Roboto, sans-serif; letter-spacing: .22px; color: #3d434b; margin-bottom: 13px; }
.para { font-size: 16px; line-height: 24px; letter-spacing: .14px; color: #111; white-space: nowrap; margin-bottom: 10px; }
article a { color: #2f67dd; }

.exercise { width: 844px; height: 319px; margin: 11px 0 0 -13px; padding: 16px 20px 0 19px; background: #efece3; border-radius: 3px; }
h2 { font-size: 15px; line-height: 24px; font-weight: normal; letter-spacing: -.03px; color: #858585; }
.row { height: 35px; display: grid; grid-template-columns: 80px 549px 148px 20px; white-space: nowrap; }
.row.head { height: 35px; margin-bottom: 6px; border-bottom: 2px solid #ddd; font: 500 16px/39px Roboto, sans-serif; letter-spacing: .15px; color: #424548; }
.row.head span:first-child { padding-left: 11px; }
.row.head span:nth-child(2) { margin-left: -2px; }
.task { font-size: 14.500px; line-height: 36px; height: 30px; color: #444; margin-top: -5px; }
.text { font-size: 16px; line-height: 30px; letter-spacing: .18px; color: #111; }
.text i { font-style: normal; color: #66c53c; }
.group { display: inline-block; margin-top: 4px; height: 26px; padding: 0 7px; background: #5bc623; border-radius: 3px; color: #fff; font-size: 13px; line-height: 26px; font-weight: 600; letter-spacing: -.2px; }
.row svg { width: 20px; height: 20px; margin-top: 7px; }
.answer { display: flex; align-items: center; height: 42px; margin-top: 7px; }
.field { width: 603px; height: 42px; padding-left: 15px; background: #fff; border: 1.500px solid #92b8f0; border-radius: 2px; font: 17px/40px "DejaVu Sans Mono", monospace; color: #444; }
.go { width: 201px; height: 40px; background: #5bc623; border-radius: 0 3px 3px 0; text-align: center; color: #fff; font-size: 18.500px; line-height: 41px; }
.hint { margin-top: 10px; font-size: 14.500px; line-height: 24px; font-style: italic; letter-spacing: -.04px; color: #888; white-space: nowrap; }
.next { display: grid; grid-template-columns: 557px 300px; padding-top: 13px; font-size: 15px; line-height: 24px; letter-spacing: -.34px; color: #777; white-space: nowrap; }
.next a { margin-left: 8px; }

aside { padding-top: 3px; }
h3 { font: 400 17px/30px Roboto, sans-serif; letter-spacing: -.12px; color: #454950; }
dl { display: grid; grid-template-columns: 58px 210px; margin: 0 0 0 2px; font-size: 13px; line-height: 20px; letter-spacing: -.1px; color: #666; white-space: nowrap; }
dt:last-of-type { letter-spacing: -.35px; }
dd { font-style: italic; font-size: 13.500px; letter-spacing: .16px; padding-left: 1px; }

.scrollbar { width: 17px; height: 775px; background: #f1f1f1; display: flex; flex-direction: column; }
.thumb { width: 13px; height: 540px; margin: 0 2px auto; background: #c1c1c1; }

/* Desktop taskbar */
.taskbar { position: relative; height: 40px; display: flex; justify-content: space-between; background: linear-gradient(90deg, #080503 0, #030303 340px, #020a12 480px, #04131e 560px, #0a0a0a 640px, #0c0b0a 1300px, #050505 1600px); color: #fff; }
.apps { position: relative; display: grid; grid-template-columns: 48px 48px 48px 51px 45px 49px 49px; height: 40px; }
.apps div { display: grid; place-items: center; height: 40px; }
.apps .open { width: 40px; margin-left: auto; border-bottom: 2px solid #76b9ed; }
.apps .focus { width: 48px; background: #393837; }
.wall { position: absolute; left: 640px; top: 0; }
.tray { position: relative; display: flex; align-items: center; width: 240px; }
.tray svg:nth-child(2) { margin-left: 8px; }
.clock { width: 62px; margin-left: 6px; text-align: center; font-size: 12px; line-height: 18px; letter-spacing: -.35px; }
.clock + svg { margin-left: 12px; }
.notes { font-size: 13px; text-anchor: middle; fill: #fff; }
.peek { width: 1px; height: 40px; margin-left: 11px; background: #666; }
```
